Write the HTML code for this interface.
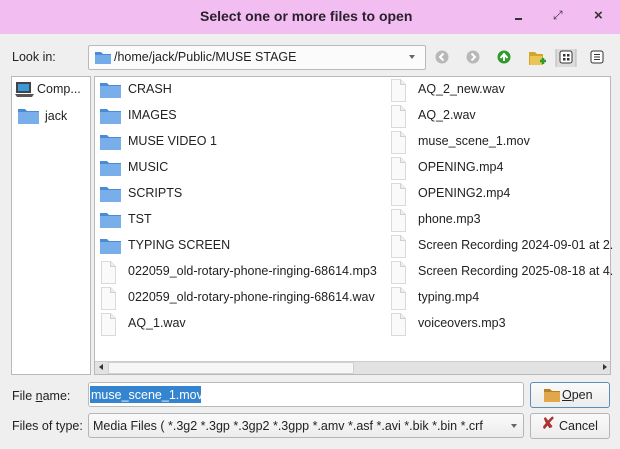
<!DOCTYPE html>
<html><head><meta charset="utf-8"><style>
*{box-sizing:border-box;margin:0;padding:0}
body{width:620px;height:449px;background:#efefef;font-family:"Liberation Sans","DejaVu Sans",sans-serif;font-size:12.5px;color:#222;position:relative;overflow:hidden}
.a{position:absolute;white-space:nowrap}
.title{left:0;top:0;width:620px;height:34px;background:#f2bdf0;}
.box{background:#fff;border:1px solid #b9b9b9;border-radius:2px}
.fold{position:absolute;width:21px;height:16px}
.btn{background:linear-gradient(#fafafa,#ececec);border:1px solid #b5b5b5;border-radius:3px}
</style></head><body>
<div class="a title"></div>
<div class="a" style="left:200px;top:8px;font-size:14px;font-weight:bold;color:#2a1f2c">Select one or more files to open</div>
<div class="a" style="left:515px;top:18px;width:7px;height:2px;background:#333"></div>
<div class="a" style="left:553px;top:8px;font-size:12px;color:#333">⤢</div>
<div class="a" style="left:594px;top:7px;font-size:15px;font-weight:bold;color:#333">×</div>

<div class="a" style="left:12px;top:50px">Look in:</div>
<div class="a box" style="left:88px;top:45px;width:338px;height:25px;background:#fbfbfb"></div>
<svg class="a" style="left:94px;top:50px" width="18" height="15"><path d="M1 2h6l2 2h8v10H1z" fill="#4a8bd6"/><rect x="1" y="5" width="16" height="9" fill="#74acea"/></svg>
<div class="a" style="left:114px;top:50px">/home/jack/Public/MUSE STAGE</div>
<div class="a" style="left:409px;top:55px;border-left:3px solid transparent;border-right:3px solid transparent;border-top:4px solid #666"></div>
<svg class="a" style="left:434px;top:49px" width="180" height="18">
<circle cx="8" cy="8" r="6.5" fill="#b8b8b8"/><path d="M9.5 4.5L6 8l3.5 3.5" stroke="#fff" stroke-width="2" fill="none"/>
<circle cx="39" cy="8" r="6.5" fill="#b8b8b8"/><path d="M37.5 4.5L41 8l-3.5 3.5" stroke="#fff" stroke-width="2" fill="none"/>
<circle cx="70" cy="8" r="6.5" fill="#2e9a2a"/><path d="M66.5 9L70 5l3.5 4M70 5v7" stroke="#fff" stroke-width="2" fill="none"/>
<path d="M95 3h6l2 2h6v11H95z" fill="#d4a52a"/><rect x="96" y="7" width="12" height="9" fill="#e9c456"/><path d="M106 12h6M109 9v6" stroke="#2e9a2a" stroke-width="2.5"/>
<rect x="122" y="-3" width="20" height="23" rx="2" fill="#dcdcdc" stroke="#b8b8b8"/>
<rect x="126" y="2" width="12" height="12" rx="2" fill="#fff" stroke="#333"/><rect x="129" y="5" width="2.5" height="2.5" fill="#333"/><rect x="133" y="5" width="2.5" height="2.5" fill="#333"/><rect x="129" y="9" width="2.5" height="2.5" fill="#333"/><rect x="133" y="9" width="2.5" height="2.5" fill="#333"/>
<rect x="157" y="2" width="12" height="12" rx="2" fill="#fff" stroke="#333"/><path d="M160 5.5h6M160 8h6M160 10.5h6" stroke="#333"/>
</svg>

<div class="a box" style="left:11px;top:76px;width:80px;height:299px;border-radius:0"></div>
<svg class="a" style="left:15px;top:81px" width="20" height="18"><rect x="1" y="1" width="15" height="11" fill="#444"/><rect x="3" y="3" width="11" height="7" fill="#3a9ad9"/><path d="M0 13h19l-2 3H2z" fill="#555"/></svg>
<div class="a" style="left:37px;top:82px">Comp...</div>
<svg class="a fold" style="left:18px;top:108px"><path d="M0 1h7l2 2h12v13H0z" fill="#4a8bd6"/><rect x="0" y="4" width="21" height="12" fill="#78aeea"/></svg>
<div class="a" style="left:45px;top:109px">jack</div>

<div class="a box" style="left:94px;top:76px;width:517px;height:299px;border-radius:0"></div>
<div id="L"></div>
<div class="a" style="left:95px;top:361px;width:515px;height:13px;background:#e2e2e2;border-top:1px solid #ccc"></div>
<div class="a" style="left:108px;top:362px;width:246px;height:12px;background:#f6f6f6;border:1px solid #d0d0d0"></div>
<div class="a" style="left:99px;top:364px;border-top:3px solid transparent;border-bottom:3px solid transparent;border-right:4px solid #333"></div>
<div class="a" style="left:603px;top:364px;border-top:3px solid transparent;border-bottom:3px solid transparent;border-left:4px solid #333"></div>

<div class="a" style="left:12px;top:389px">File <u>n</u>ame:</div>
<div class="a box" style="left:88px;top:382px;width:436px;height:25px;border-radius:3px"></div>
<div class="a" style="left:90px;top:386px;height:17px;width:111px;background:#3584d0"></div>
<div class="a" style="left:91px;top:388px;color:#fff">muse_scene_1.mov</div>
<div class="a btn" style="left:530px;top:382px;width:80px;height:26px;border-color:#5a8db8"></div>
<svg class="a" style="left:544px;top:387px" width="17" height="15"><path d="M0 2h6l2 2h8v11H0z" fill="#b5822a"/><rect x="0" y="5" width="16" height="10" fill="#e0a84a"/></svg>
<div class="a" style="left:562px;top:388px"><u>O</u>pen</div>

<div class="a" style="left:12px;top:419px">Files of type:</div>
<div class="a btn" style="left:88px;top:413px;width:436px;height:25px"></div>
<div class="a" style="left:93px;top:419px">Media Files ( *.3g2 *.3gp *.3gp2 *.3gpp *.amv *.asf *.avi *.bik *.bin *.crf</div>
<div class="a" style="left:511px;top:424px;border-left:3px solid transparent;border-right:3px solid transparent;border-top:4px solid #666"></div>
<div class="a btn" style="left:530px;top:413px;width:80px;height:26px"></div>
<div class="a" style="left:541px;top:414px;font-size:17px;font-weight:bold;color:#a33">✘</div>
<div class="a" style="left:559px;top:419px">Cancel</div>

<script>
var c1=[["CRASH",1],["IMAGES",1],["MUSE VIDEO 1",1],["MUSIC",1],["SCRIPTS",1],["TST",1],["TYPING SCREEN",1],["022059_old-rotary-phone-ringing-68614.mp3",0],["022059_old-rotary-phone-ringing-68614.wav",0],["AQ_1.wav",0]];
var c2=["AQ_2_new.wav","AQ_2.wav","muse_scene_1.mov","OPENING.mp4","OPENING2.mp4","phone.mp3","Screen Recording 2024-09-01 at 2.","Screen Recording 2025-08-18 at 4.","typing.mp4","voiceovers.mp3"];
var h="";
function item(x,y,t,f){var s="";
 if(f)s+='<svg class="a fold" style="left:'+(x)+'px;top:'+(y-8)+'px"><path d="M0 1h7l2 2h12v13H0z" fill="#4a8bd6"/><rect x="0" y="4" width="21" height="12" fill="#78aeea"/></svg>';
 else s+='<svg class="a" style="left:'+(x)+'px;top:'+(y-11)+'px" width="17" height="23"><path d="M1.5 0.5h9l5 5v17h-14z" fill="#fafafa" stroke="#dadada"/><path d="M10.5 0.5v5h5" fill="#eee" stroke="#d0d0d0"/></svg>';
 s+='<div class="a" style="left:'+(x+28)+'px;top:'+(y-8)+'px">'+t+'</div>';return s;}
for(var i=0;i<10;i++){var y=90+i*26;h+=item(100,y,c1[i][0],c1[i][1]);h+=item(390,y,c2[i],0);}
document.getElementById("L").outerHTML=h;
</script>
</body></html>
